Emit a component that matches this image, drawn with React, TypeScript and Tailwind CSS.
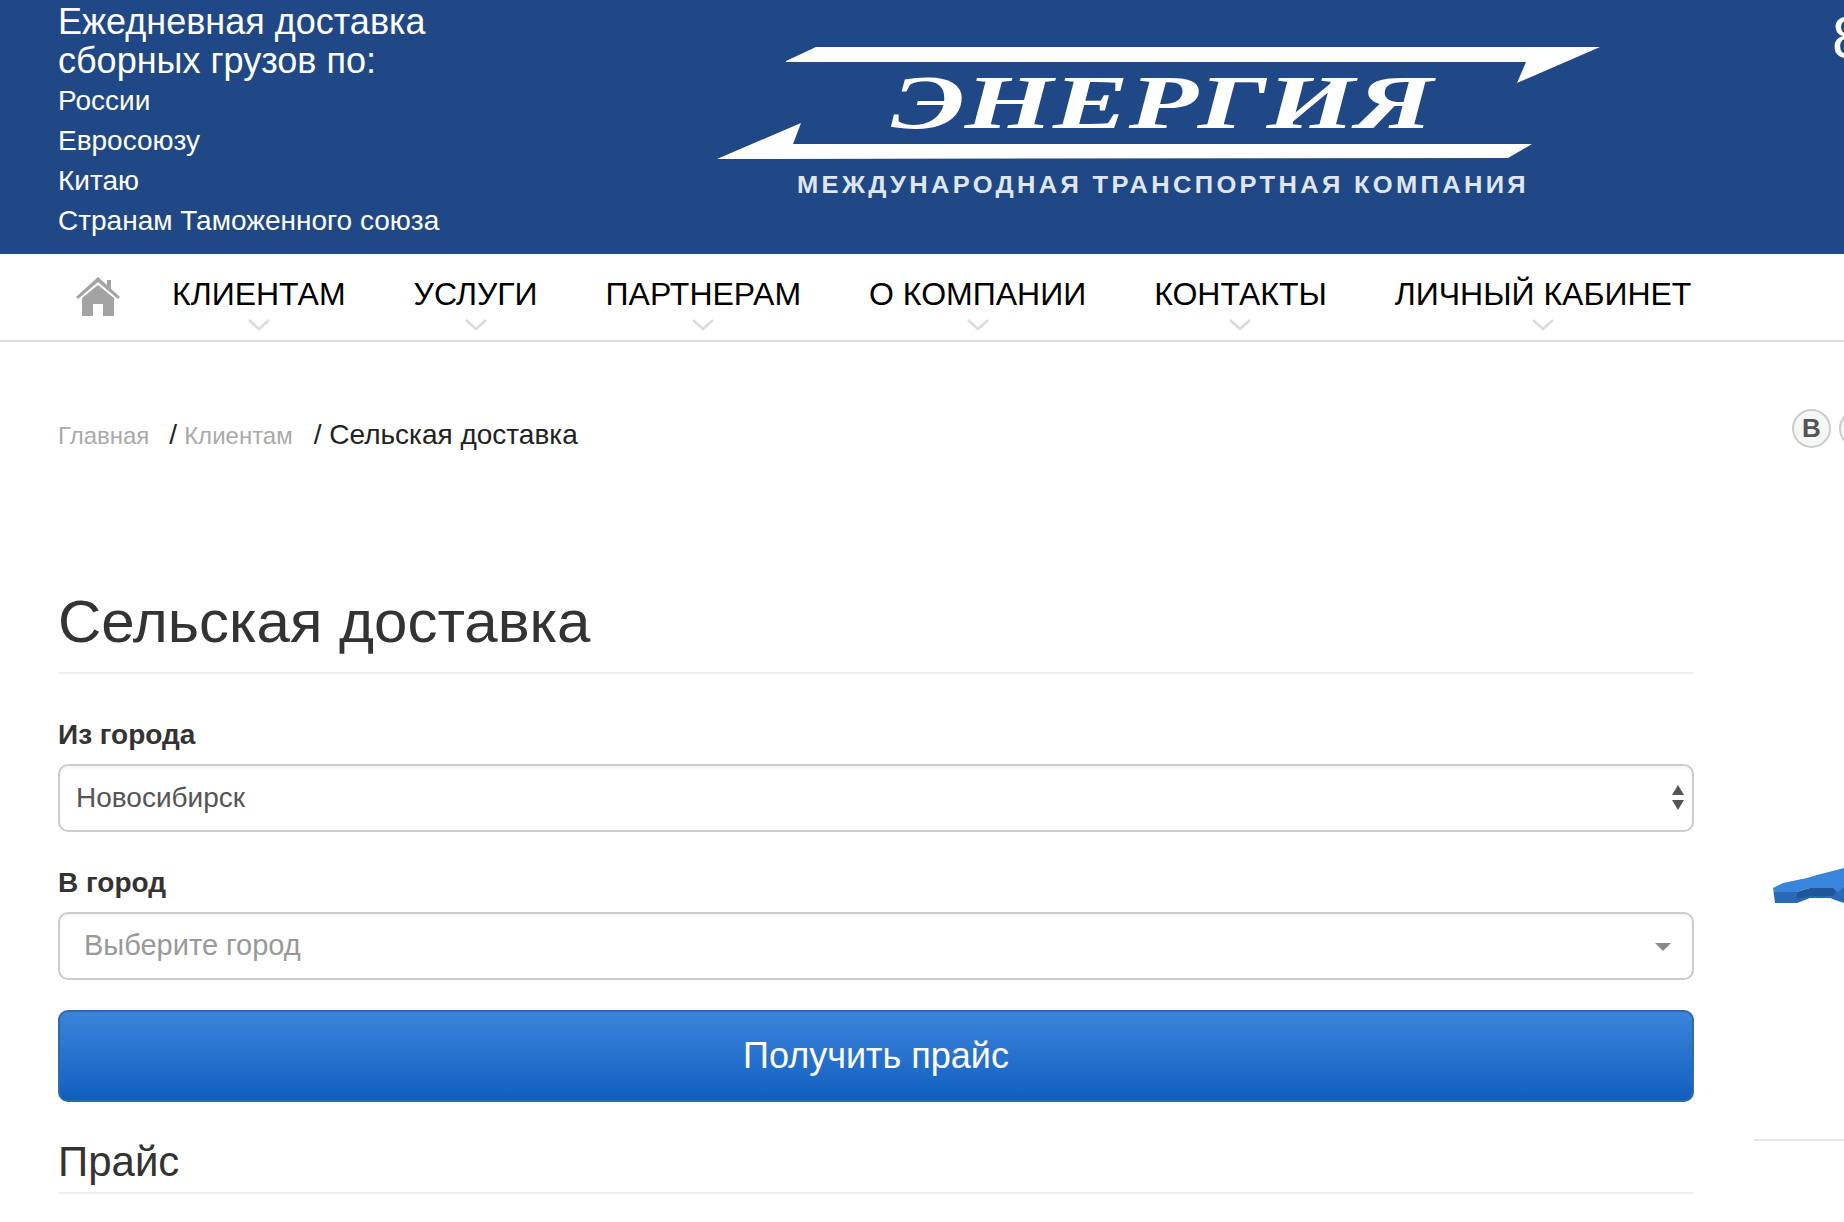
const navItems = ["КЛИЕНТАМ", "УСЛУГИ", "ПАРТНЕРАМ", "О КОМПАНИИ", "КОНТАКТЫ", "ЛИЧНЫЙ КАБИНЕТ"];
const regions = ["России", "Евросоюзу", "Китаю", "Странам Таможенного союза"];

function Logo() {
  return (
    <svg width="884" height="170" viewBox="717 40 884 170" className="shrink-0">
      <polygon points="786,61 816,47 1600,47 1517,83 1526,62 786,62" fill="#fff" />
      <polygon points="717,159 801,123 793,144 1532,144 1508,158" fill="#fff" />
      <text x="891" y="128" textLength="542" lengthAdjust="spacingAndGlyphs" fontFamily="Liberation Serif" fontStyle="italic" fontWeight="700" fontSize="76" fill="#fff">ЭНЕРГИЯ</text>
      <text x="797" y="193" textLength="732" lengthAdjust="spacingAndGlyphs" letterSpacing="3" fontFamily="Liberation Sans" fontWeight="700" fontSize="23" fill="#dfe6f0">МЕЖДУНАРОДНАЯ ТРАНСПОРТНАЯ КОМПАНИЯ</text>
    </svg>
  );
}

function HomeIcon() {
  return (
    <svg width="44" height="40" viewBox="0 0 44 40" className="shrink-0" fill="#a3a3a3">
      <polygon points="31,3 35,3 35,13 31,10" />
      <polygon points="22,0 44,20 42,22 22,5 2,22 0,20" />
      <path d="M22 8 L38 21 V39 H27 V27 H17 V39 H6 V21 Z" />
    </svg>
  );
}

function Chevron() {
  return (
    <svg width="22" height="12" viewBox="0 0 22 12" fill="none" stroke="#dcdcdc" strokeWidth="2.5">
      <path d="M1 1 L11 10 L21 1" />
    </svg>
  );
}

function NavItem({ label }: { label: string }) {
  return (
    <div className="relative text-[32px] leading-none text-black whitespace-nowrap">
      {label}
      <div className="absolute left-0 right-0 top-[41px] flex justify-center">
        <Chevron />
      </div>
    </div>
  );
}

function SelectBox({ text, placeholder }: { text: string; placeholder?: boolean }) {
  return (
    <div className="relative h-[68px] rounded-[10px] border-2 border-[#ccc] bg-white shadow-[inset_0_2px_3px_rgba(0,0,0,0.05)] flex items-center">
      <span className={placeholder ? "pl-[24px] text-[29px] text-[#999]" : "pl-[16px] text-[28px] text-[#555]"}>{text}</span>
      {placeholder ? (
        <div className="absolute right-[21px] top-[29px] size-0 border-x-[8px] border-t-[8px] border-x-transparent border-t-[#888]" />
      ) : (
        <div className="absolute right-[8px] top-[19px] flex flex-col gap-[5px]">
          <div className="size-0 border-x-[6px] border-b-[10px] border-x-transparent border-b-[#555]" />
          <div className="size-0 border-x-[6px] border-t-[10px] border-x-transparent border-t-[#555]" />
        </div>
      )}
    </div>
  );
}

export default function App() {
  return (
    <div className="w-[1844px] h-[1222px] overflow-hidden bg-white font-['Liberation_Sans',sans-serif]">
      <header className="h-[254px] bg-[#204886] flex text-white overflow-hidden">
        <div className="w-[717px] shrink-0 pl-[58px]">
          <div className="text-[36px] leading-[39px] pt-[2px]">
            Ежедневная доставка
            <br />
            сборных грузов по:
          </div>
          <div className="text-[28px] leading-[40px] mt-[1px]">
            {regions.map((r) => (
              <div key={r}>{r}</div>
            ))}
          </div>
        </div>
        <div className="pt-[40px]">
          <Logo />
        </div>
        <div className="ml-[231px] pt-[3px] text-[60px] leading-[70px] whitespace-nowrap">8</div>
      </header>

      <nav className="h-[88px] border-b-2 border-[#ddd] pl-[76px] flex items-start pt-[23px]">
        <HomeIcon />
        <div className="ml-[52px] flex gap-[68px] pt-[1px]">
          {navItems.map((n) => (
            <NavItem key={n} label={n} />
          ))}
        </div>
      </nav>

      <div className="flex">
        <main className="ml-[58px] w-[1636px] shrink-0">
          <div className="pt-[77px] leading-[32px] flex items-baseline whitespace-nowrap">
            <span className="text-[24px] text-[#aaa]">Главная</span>
            <span className="ml-[20px] text-[28px] text-[#222]">/</span>
            <span className="ml-[7px] text-[24px] text-[#aaa]">Клиентам</span>
            <span className="ml-[21px] text-[28px] text-[#222]">/ Сельская доставка</span>
          </div>
          <h1 className="mt-[135px] text-[60px] leading-[70px] text-[#333] pb-[15px] border-b-2 border-[#eee]">Сельская доставка</h1>
          <label className="block mt-[45px] mb-[13px] text-[28px] leading-[32px] font-bold text-[#333]">Из города</label>
          <SelectBox text="Новосибирск" />
          <label className="block mt-[35px] mb-[13px] text-[28px] leading-[32px] font-bold text-[#333]">В город</label>
          <SelectBox text="Выберите город" placeholder />
          <button className="mt-[30px] w-full h-[92px] rounded-[10px] border-2 border-[#2f6aa9] bg-gradient-to-b from-[#3b84da] to-[#0f5fc0] text-[36px] text-white">
            Получить прайс
          </button>
          <h2 className="mt-[35px] text-[42px] leading-[50px] text-[#333] pb-[5px] border-b-2 border-[#eee]">Прайс</h2>
        </main>

        <aside className="ml-[60px] flex-1 relative">
          <div className="flex gap-[8px] pt-[67px] pl-[38px]">
            <div className="size-[39px] shrink-0 rounded-full border-2 border-[#ccc] bg-[#f6f6f6] flex items-center justify-center text-[26px] font-bold text-[#555]">В</div>
            <div className="size-[39px] shrink-0 rounded-full border-2 border-[#ccc] bg-[#f6f6f6]" />
          </div>
          <svg width="71" height="38" viewBox="0 0 71 38" className="ml-[19px] mt-[420px]">
            <path d="M0 20 L2 35 L24 35 L37 30 L57 30 L65 33 L71 35 V19 L60 20 L37 20 L24 24 L2 24 Z" fill="#2a68b8" />
            <path d="M24 24 L37 20 L60 20 L63 24 L60 28 L37 28 L24 31 Z" fill="#1d4f8f" opacity="0.75" />
            <path d="M0 20 L10 15 L34 10 L44 7 L71 0 V19 L65 24 L60 20 L37 20 L24 24 L2 24 Z" fill="#3a85dc" />
          </svg>
          <div className="mt-[233px] h-[2px] bg-[#e5e5e5]" />
        </aside>
      </div>
    </div>
  );
}
